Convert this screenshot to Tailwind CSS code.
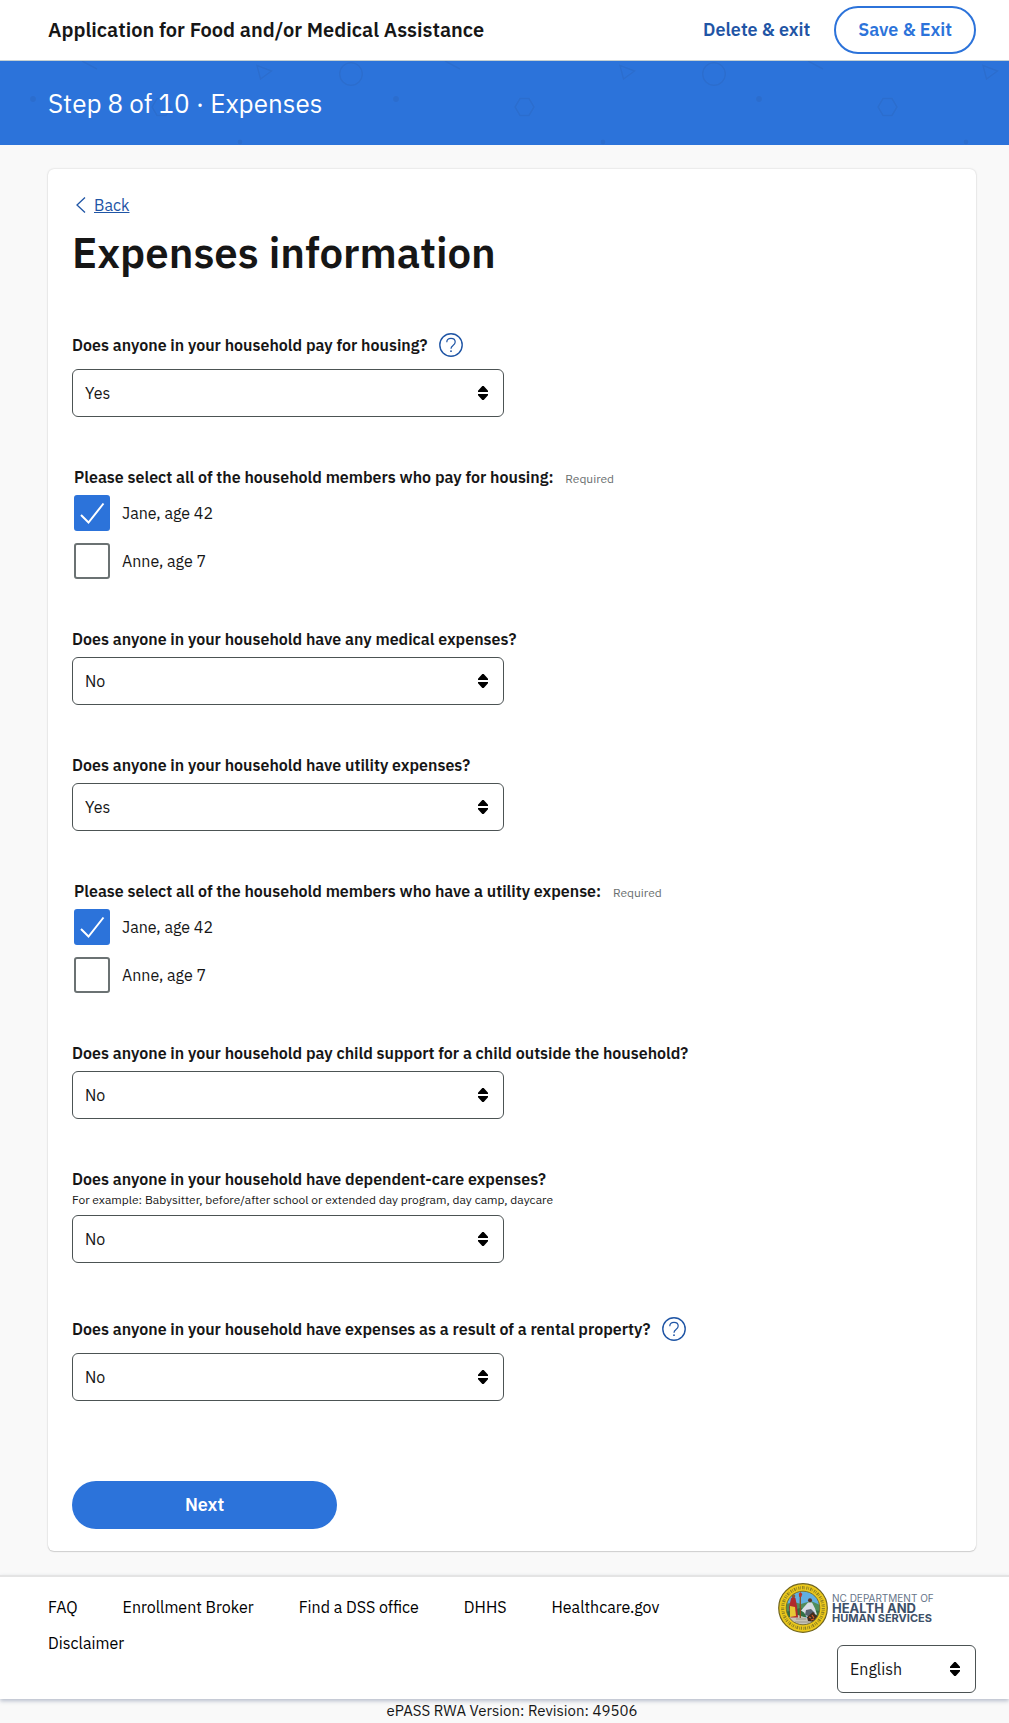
<!DOCTYPE html>
<html lang="en">
<head>
<meta charset="utf-8">
<meta name="viewport" content="width=device-width, initial-scale=1">
<title>Expenses information</title>
<script src="https://cdn.jsdelivr.net/npm/@tailwindcss/browser@4"></script>
</head>
<body class="min-h-screen bg-[#f9f9f9] font-['IBM_Plex_Sans',Roboto,sans-serif] text-base text-[#161616]">
<svg class="hidden" aria-hidden="true">
  <symbol id="sort" viewBox="0 0 10 14"><path d="M4.300 0h1.400L10 4.800V6H0V4.800zM0 8h10v1.200L5.700 14H4.300L0 9.200z"/></symbol>
  <symbol id="help" viewBox="0 0 24 24"><g fill="none" stroke="currentColor"><circle cx="12" cy="12" r="11.2" stroke-width="1.4"/><path d="M7.8 9.2c0-2.300 1.700-3.900 4.200-3.900s4.200 1.500 4.200 3.700c0 2-1.200 2.800-2.400 3.700-1.100.8-1.800 1.500-1.800 3" stroke-width="1.200"/></g><circle cx="12" cy="18.200" r=".9" fill="currentColor"/></symbol>
  <symbol id="check" viewBox="0 0 36 36"><path d="M7 20l7.500 7.500L29.500 8.500" fill="none" stroke="#fff" stroke-width="2"/></symbol>
</svg>

<header class="flex h-[61px] items-center justify-between border-b border-[#c6d0d2] bg-white pr-[33px] pl-12">
  <p class="text-xl font-semibold">Application for Food and/or Medical Assistance</p>
  <div class="flex items-center gap-6">
    <a href="#" class="text-lg font-semibold text-[#1f55a5]">Delete &amp; exit</a>
    <button type="button" class="h-12 rounded-full border-2 border-[#2c73da] px-[22px] text-lg font-semibold text-[#2c73da]">Save &amp; Exit</button>
  </div>
</header>

<div class="relative flex h-[84px] items-center bg-[#2c73da] pl-12">
  <svg class="absolute inset-0 h-full w-full" aria-hidden="true">
    <defs>
      <pattern id="shapes" width="363" height="84" patternUnits="userSpaceOnUse">
        <g fill="none" stroke="#2b6dce" stroke-width="1.500">
          <path d="M82 0l15 8"/><path d="M257 4.500l14.500 5.500-11 8z"/><circle cx="351" cy="13" r="11.300"/><circle cx="-12" cy="13" r="11.300"/>
          <path d="M157 37.500h9l5 8.500-5 8.500h-9l-5-8.500z"/>
        </g>
        <g fill="#2b6dce"><circle cx="33" cy="38" r="3"/><circle cx="240" cy="81" r="2.400"/></g>
      </pattern>
    </defs>
    <rect width="100%" height="100%" fill="url(#shapes)"/>
  </svg>
  <p class="relative text-[26px] leading-9 text-white">Step 8 of 10 · Expenses</p>
</div>

<main class="py-6 pr-[33px] pl-12">
  <form class="rounded-md bg-white px-6 pt-6 pb-[22px] shadow-[0_0_2px_rgba(0,0,0,0.2),0_1px_1px_rgba(0,0,0,0.12)]">
    <a href="#" class="flex h-6 items-center gap-2 pl-1 text-[#1f55a5]">
      <svg class="h-4 w-[10px]" viewBox="0 0 10 16" fill="none" stroke="currentColor" stroke-width="1.300" aria-hidden="true"><path d="M9 .5 1 8l8 7.500"/></svg>
      <span class="underline">Back</span>
    </a>
    <h1 class="mt-3 text-[42px] leading-12 font-semibold">Expenses information</h1>

    <div class="mt-[50px] flex flex-col gap-12">
      <div>
        <div class="flex h-9 items-center gap-3">
          <label for="housing" class="font-semibold">Does anyone in your household pay for housing?</label>
          <button type="button" aria-label="Help: housing" class="text-[#1f55a5]"><svg class="size-6"><use href="#help"/></svg></button>
        </div>
        <div class="relative mt-1.5 max-w-[432px]">
          <select id="housing" class="h-12 w-full appearance-none rounded-md border border-[#4c5354] bg-white px-3"><option>Yes</option><option>No</option></select>
          <svg class="pointer-events-none absolute top-[17px] right-4 h-3.5 w-2.5"><use href="#sort"/></svg>
        </div>
      </div>

      <fieldset class="pl-0.5">
        <legend class="font-semibold">Please select all of the household members who pay for housing: <span class="pl-2 text-xs font-normal text-[#6b6f70]">Required</span></legend>
        <div class="mt-1.5 flex flex-col items-start gap-3">
          <label class="flex items-center gap-3"><span class="relative size-9"><input type="checkbox" checked class="peer block size-9 appearance-none rounded-[3px] border-2 border-[#6b7273] checked:border-[#2c73da] checked:bg-[#2c73da]"><svg class="pointer-events-none absolute inset-0 hidden size-9 peer-checked:block"><use href="#check"/></svg></span>Jane, age 42</label>
          <label class="flex items-center gap-3"><span class="relative size-9"><input type="checkbox" class="peer block size-9 appearance-none rounded-[3px] border-2 border-[#6b7273] checked:border-[#2c73da] checked:bg-[#2c73da]"><svg class="pointer-events-none absolute inset-0 hidden size-9 peer-checked:block"><use href="#check"/></svg></span>Anne, age 7</label>
        </div>
      </fieldset>

      <div>
        <label for="medical" class="block font-semibold">Does anyone in your household have any medical expenses?</label>
        <div class="relative mt-1.5 max-w-[432px]">
          <select id="medical" class="h-12 w-full appearance-none rounded-md border border-[#4c5354] bg-white px-3"><option>No</option><option>Yes</option></select>
          <svg class="pointer-events-none absolute top-[17px] right-4 h-3.5 w-2.5"><use href="#sort"/></svg>
        </div>
      </div>

      <div>
        <label for="utility" class="block font-semibold">Does anyone in your household have utility expenses?</label>
        <div class="relative mt-1.5 max-w-[432px]">
          <select id="utility" class="h-12 w-full appearance-none rounded-md border border-[#4c5354] bg-white px-3"><option>Yes</option><option>No</option></select>
          <svg class="pointer-events-none absolute top-[17px] right-4 h-3.5 w-2.5"><use href="#sort"/></svg>
        </div>
      </div>

      <fieldset class="pl-0.5">
        <legend class="font-semibold">Please select all of the household members who have a utility expense: <span class="pl-2 text-xs font-normal text-[#6b6f70]">Required</span></legend>
        <div class="mt-1.5 flex flex-col items-start gap-3">
          <label class="flex items-center gap-3"><span class="relative size-9"><input type="checkbox" checked class="peer block size-9 appearance-none rounded-[3px] border-2 border-[#6b7273] checked:border-[#2c73da] checked:bg-[#2c73da]"><svg class="pointer-events-none absolute inset-0 hidden size-9 peer-checked:block"><use href="#check"/></svg></span>Jane, age 42</label>
          <label class="flex items-center gap-3"><span class="relative size-9"><input type="checkbox" class="peer block size-9 appearance-none rounded-[3px] border-2 border-[#6b7273] checked:border-[#2c73da] checked:bg-[#2c73da]"><svg class="pointer-events-none absolute inset-0 hidden size-9 peer-checked:block"><use href="#check"/></svg></span>Anne, age 7</label>
        </div>
      </fieldset>

      <div>
        <label for="support" class="block font-semibold">Does anyone in your household pay child support for a child outside the household?</label>
        <div class="relative mt-1.5 max-w-[432px]">
          <select id="support" class="h-12 w-full appearance-none rounded-md border border-[#4c5354] bg-white px-3"><option>No</option><option>Yes</option></select>
          <svg class="pointer-events-none absolute top-[17px] right-4 h-3.5 w-2.5"><use href="#sort"/></svg>
        </div>
      </div>

      <div>
        <label for="care" class="block font-semibold">Does anyone in your household have dependent-care expenses?</label>
        <p id="care-hint" class="text-xs leading-[18px]">For example: Babysitter, before/after school or extended day program, day camp, daycare</p>
        <div class="relative mt-1.5 max-w-[432px]">
          <select id="care" aria-describedby="care-hint" class="h-12 w-full appearance-none rounded-md border border-[#4c5354] bg-white px-3"><option>No</option><option>Yes</option></select>
          <svg class="pointer-events-none absolute top-[17px] right-4 h-3.5 w-2.5"><use href="#sort"/></svg>
        </div>
      </div>

      <div>
        <div class="flex h-9 items-center gap-3">
          <label for="rental" class="font-semibold">Does anyone in your household have expenses as a result of a rental property?</label>
          <button type="button" aria-label="Help: rental property" class="text-[#1f55a5]"><svg class="size-6"><use href="#help"/></svg></button>
        </div>
        <div class="relative mt-1.5 max-w-[432px]">
          <select id="rental" class="h-12 w-full appearance-none rounded-md border border-[#4c5354] bg-white px-3"><option>No</option><option>Yes</option></select>
          <svg class="pointer-events-none absolute top-[17px] right-4 h-3.5 w-2.5"><use href="#sort"/></svg>
        </div>
      </div>
    </div>

    <button type="submit" class="mt-20 block h-12 w-full max-w-[265px] rounded-full bg-[#2c73da] text-lg font-semibold text-white">Next</button>
  </form>
</main>

<footer>
  <div class="flex justify-between border-t-2 border-[#e4e4e4] bg-white pt-1.5 pr-[33px] pb-1.5 pl-12 shadow-[0_2px_4px_rgba(60,80,120,0.35)]">
    <nav class="flex max-w-[640px] flex-wrap content-start gap-x-[45px] pt-1.5 leading-9 text-black">
      <a href="#">FAQ</a><a href="#">Enrollment Broker</a><a href="#">Find a DSS office</a><a href="#">DHHS</a><a href="#">Healthcare.gov</a><a href="#">Disclaimer</a>
    </nav>
    <div class="flex w-[198px] shrink-0 flex-col gap-3">
      <div class="flex h-[50px] items-center gap-1">
        <svg class="size-[50px] shrink-0" viewBox="0 0 50 50" role="img" aria-label="Seal of the State of North Carolina">
          <defs>
            <clipPath id="disc"><circle cx="25" cy="25" r="16.800"/></clipPath>
          </defs>
          <circle cx="25" cy="25" r="24.300" fill="#ecc91c" stroke="#6f6420" stroke-width="1.200"/>
          <circle cx="25" cy="25" r="20.300" fill="none" stroke="#8f8122" stroke-width="3.200" stroke-dasharray="1.100 .9 .7 1.200 1.500 .8 .6 1.400"/>
          <g clip-path="url(#disc)">
            <path d="M8 8h34v34H8z" fill="#62afe0"/>
            <path d="M8 21l8-2 7 2 10-3 9 4v7H8z" fill="#4f8d5b"/>
            <path d="M8 29l14-4 20 3v6H8z" fill="#2e6f43"/>
            <path d="M8 35l12-3 9 3 13-2v10H8z" fill="#c6c3b6"/>
            <path d="M13 15.500l2.500-2.500 2 2.500 1.500 8 1 11h-7.500l-1.500-10z" fill="#b12a2c"/>
            <path d="M12 23l5 1 1 9-6 1z" fill="#e7c936"/>
            <circle cx="15.500" cy="13" r="1.800" fill="#8a5732"/>
            <path d="M22.300 10v25" stroke="#8b4b1c" stroke-width="1.300"/>
            <path d="M20.800 11l1.500-2 2 2-1 3h-2z" fill="#bd3525"/>
            <circle cx="32" cy="17.300" r="2" fill="#5b3725"/>
            <path d="M30 19.500h4l3 6 2 6-10 3-3-5-3-2z" fill="#d7dce3"/>
            <path d="M28 27l5-1 4 4-4 4-6-2z" fill="#55606c"/>
            <path d="M29 34l6-5 5 5-4 5-6-1z" fill="#432d1d"/>
            <path d="M31 34l2 1M34 32l2 3M33 37l3-1" stroke="#d45d2a" stroke-width="1.200"/>
            <path d="M18 36h10M17 39h15" stroke="#9a968a" stroke-width="1"/>
          </g>
          <circle cx="25" cy="25" r="16.800" fill="none" stroke="#77691d" stroke-width=".9"/>
        </svg>
        <p class="font-['Inter',sans-serif] leading-[10px] whitespace-nowrap text-[#3d5068]">
          <span class="block text-[10px] text-[#66758a]">NC DEPARTMENT OF</span>
          <span class="block text-[13px] font-bold">HEALTH AND</span>
          <span class="block text-[11px] font-bold">HUMAN SERVICES</span>
        </p>
      </div>
      <div class="relative w-[139px] self-end">
        <select aria-label="Language" class="h-12 w-full appearance-none rounded-md border border-[#4c5354] bg-white px-3"><option>English</option><option>Español</option></select>
        <svg class="pointer-events-none absolute top-[17px] right-4 h-3.5 w-2.5"><use href="#sort"/></svg>
      </div>
    </div>
  </div>
  <p class="pr-[33px] pl-12 text-center text-[15px] leading-6">ePASS RWA Version: Revision: 49506</p>
</footer>
</body>
</html>
